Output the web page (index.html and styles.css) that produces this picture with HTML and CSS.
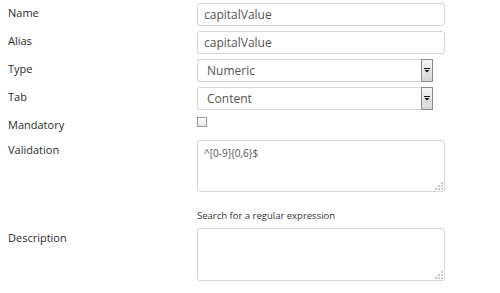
FILE: index.html
```html
<!DOCTYPE html>
<html lang="en">
<head>
    <meta charset="UTF-8">
    <meta name="viewport" content="width=device-width, initial-scale=1.0">
    <title>Property Settings</title>
    <link rel="stylesheet" href="styles.css">
</head>
<body>

    <form class="property-form">
        <div class="form-row">
            <label for="name">Name</label>
            <input type="text" id="name" class="text-input" value="capitalValue">
        </div>

        <div class="form-row">
            <label for="alias">Alias</label>
            <input type="text" id="alias" class="text-input" value="capitalValue">
        </div>

        <div class="form-row">
            <label for="type">Type</label>
            <div class="select-box">
                <span class="select-value" id="type">Numeric</span>
                <span class="select-button">
                    <svg width="6" height="5" viewBox="0 0 6 5"><path d="M0 0h6v1H0z M0.5 2h5L3 4.5z" fill="#111"/></svg>
                </span>
            </div>
        </div>

        <div class="form-row">
            <label for="tab">Tab</label>
            <div class="select-box">
                <span class="select-value" id="tab">Content</span>
                <span class="select-button">
                    <svg width="6" height="5" viewBox="0 0 6 5"><path d="M0 0h6v1H0z M0.5 2h5L3 4.5z" fill="#111"/></svg>
                </span>
            </div>
        </div>

        <div class="form-row check-row">
            <label for="mandatory">Mandatory</label>
            <input type="checkbox" id="mandatory" class="check">
        </div>

        <div class="form-row">
            <label for="validation">Validation</label>
            <div class="area-box">
                <textarea id="validation" class="text-area">^[0-9]{0,6}$</textarea>
                <svg class="grip" width="9" height="9" viewBox="0 0 9 9">
                    <rect x="7" y="0" width="2" height="2" fill="#c8c8c8"/>
                    <rect x="4" y="3" width="2" height="2" fill="#c8c8c8"/>
                    <rect x="7" y="3" width="2" height="2" fill="#c8c8c8"/>
                    <rect x="1" y="6" width="2" height="2" fill="#c8c8c8"/>
                    <rect x="4" y="6" width="2" height="2" fill="#c8c8c8"/>
                    <rect x="7" y="6" width="2" height="2" fill="#c8c8c8"/>
                </svg>
            </div>
        </div>

        <div class="help-row">Search for a regular expression</div>

        <div class="form-row">
            <label for="description">Description</label>
            <div class="area-box tall">
                <textarea id="description" class="text-area"></textarea>
                <svg class="grip" width="9" height="9" viewBox="0 0 9 9">
                    <rect x="7" y="0" width="2" height="2" fill="#c8c8c8"/>
                    <rect x="4" y="3" width="2" height="2" fill="#c8c8c8"/>
                    <rect x="7" y="3" width="2" height="2" fill="#c8c8c8"/>
                    <rect x="1" y="6" width="2" height="2" fill="#c8c8c8"/>
                    <rect x="4" y="6" width="2" height="2" fill="#c8c8c8"/>
                    <rect x="7" y="6" width="2" height="2" fill="#c8c8c8"/>
                </svg>
            </div>
        </div>
    </form>

</body>
</html>
```

FILE: styles.css
```css
body {
    font-family: "Open Sans", Arial, sans-serif;
    margin: 0;
    padding: 0;
    background-color: #fff;
}

.property-form {
    padding: 3px 0 0 8px;
}

.form-row {
    display: flex;
    align-items: flex-start;
    margin-bottom: 5px;
}

.form-row label {
    width: 189px;
    flex-shrink: 0;
    font-size: 11px;
    line-height: 20px;
    color: #2b2b2b;
}

.text-input {
    box-sizing: border-box;
    width: 248px;
    height: 23px;
    margin: 0;
    padding: 0 6px;
    border: 1px solid #d6d6d6;
    border-radius: 3px;
    font-family: inherit;
    font-size: 12px;
    color: #555;
}

/* fake native dropdown */
.select-box {
    box-sizing: border-box;
    display: flex;
    width: 236px;
    height: 23px;
    border: 1px solid #d6d6d6;
    border-right: none;
    border-radius: 3px 0 0 3px;
}

.select-value {
    flex: 1;
    padding-left: 9px;
    font-size: 12px;
    line-height: 21px;
    color: #555;
}

.select-button {
    box-sizing: border-box;
    display: flex;
    align-items: center;
    justify-content: center;
    width: 12px;
    height: 23px;
    margin-top: -1px;
    border: 1px solid #8a8a8a;
    background: linear-gradient(#f6f6f6, #d6d6d6);
}

.check-row {
    height: 20px;
}

.check {
    appearance: none;
    box-sizing: border-box;
    width: 10px;
    height: 10px;
    margin: 2px 0 0;
    border: 1px solid #9a9a9a;
    background: linear-gradient(#fdfdfd, #e6e6e6);
}

.area-box {
    position: relative;
    width: 248px;
    height: 52px;
}

.area-box.tall {
    height: 53px;
}

.text-area {
    box-sizing: border-box;
    display: block;
    width: 100%;
    height: 100%;
    margin: 0;
    padding: 4px 6px;
    border: 1px solid #d6d6d6;
    border-radius: 3px;
    resize: none;
    font-family: inherit;
    font-size: 10px;
    line-height: 16px;
    color: #555;
}

.grip {
    position: absolute;
    right: 2px;
    bottom: 1px;
}

/* margin-top collapses with the row above */
.help-row {
    margin: 17px 0 5px 189px;
    font-size: 9.5px;
    line-height: 14px;
    color: #333;
}
```
